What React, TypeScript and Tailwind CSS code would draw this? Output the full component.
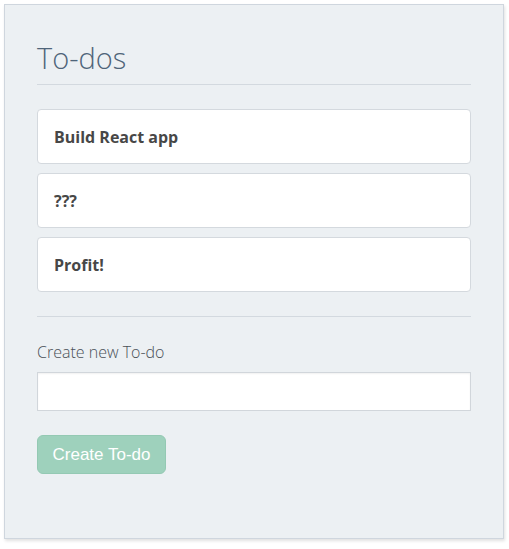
import React from "react";

export default function App() {
  const items = ["Build React app", "???", "Profit!"];
  return (
    <div className="bg-white w-[509px] h-[549px] p-[4px]" style={{ fontFamily: '"Open Sans", sans-serif' }}>
      <div className="w-[500px] h-[535px] bg-[#ecf0f3] border border-[#cfd6de] shadow-[1px_2px_3px_rgba(0,0,0,0.12)] px-[32px] pt-[33px]">
        <h1 className="text-[29px] font-light text-[#4f6479] leading-[40px]">To-dos</h1>
        <div className="mt-[6px] border-t border-[#d3d9df]" />
        <div className="mt-[24px] flex flex-col gap-[9px]">
          {items.map((t) => (
            <div key={t} className="h-[55px] bg-white border border-[#d4d9de] rounded-[4px] flex items-center px-[16px] text-[16px] font-bold text-[#474747]">
              {t}
            </div>
          ))}
        </div>
        <div className="mt-[24px] border-t border-[#d3d9df]" />
        <div className="mt-[24px] text-[16px] font-light text-[#4a5158] leading-[22px]">Create new To-do</div>
        <div className="mt-[9px] h-[39px] bg-white border border-[#d1d6db] shadow-[inset_0_1px_2px_rgba(0,0,0,0.06)]" />
        <button
          className="mt-[24px] h-[39px] w-[129px] rounded-[6px] bg-[#9ed1bc] border border-[#94c9b3] text-white text-[17px]"
          style={{ fontFamily: '"Liberation Sans", Arial, sans-serif' }}
        >
          Create To-do
        </button>
      </div>
    </div>
  );
}
